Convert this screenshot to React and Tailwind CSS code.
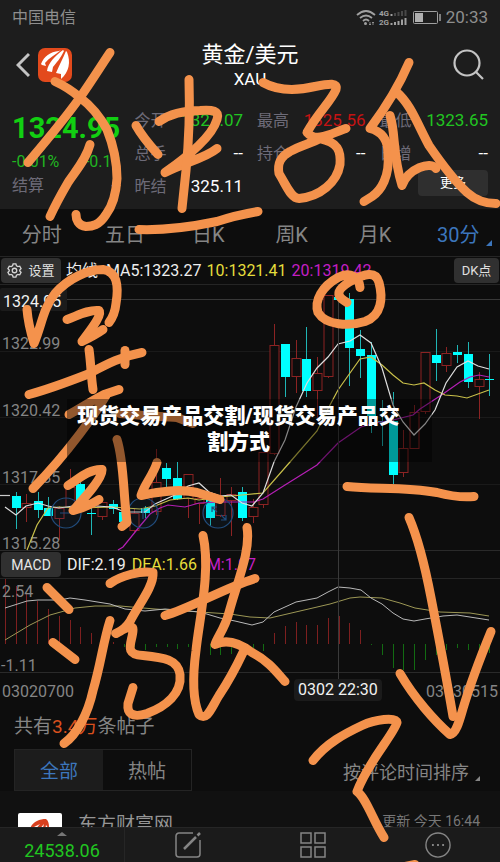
import { useState } from 'react'

const UP = '#8c2323'
const DOWN = '#00ffff'

// x centre, high, body top, body bottom, low, rising
const candles = [
  [16, 492, 496, 508, 529, false],
  [26, 494, 503, 507, 522, true],
  [38, 492, 501, 510, 518, false],
  [48, 497, 508, 516, 516, false],
  [59, 506, 508, 518, 540, true],
  [70, 469, 487, 507, 512, true],
  [80, 482, 484, 505, 510, false],
  [91, 506, 513, 514, 535, false],
  [102, 498, 502, 516, 520, true],
  [113, 500, 504, 509, 514, false],
  [123, 510, 512, 522, 524, false],
  [134, 508, 513, 530, 532, true],
  [145, 506, 508, 513, 518, false],
  [156, 449, 482, 511, 515, true],
  [166, 463, 468, 479, 488, false],
  [177, 462, 478, 499, 500, false],
  [188, 474, 474, 498, 518, true],
  [199, 493, 498, 503, 524, true],
  [210, 497, 500, 518, 526, false],
  [220, 478, 500, 515, 517, true],
  [231, 487, 494, 500, 536, true],
  [242, 487, 492, 518, 521, false],
  [253, 499, 507, 516, 523, true],
  [263, 452, 452, 504, 508, true],
  [274, 324, 345, 453, 455, true],
  [285, 344, 344, 377, 397, false],
  [296, 340, 358, 376, 393, true],
  [306, 327, 359, 391, 397, false],
  [317, 357, 373, 390, 418, true],
  [328, 295, 295, 376, 378, true],
  [338, 292, 297, 300, 333, false],
  [349, 293, 299, 348, 386, false],
  [360, 330, 349, 356, 378, false],
  [371, 342, 355, 416, 433, false],
  [382, 400, 421, 422, 446, false],
  [393, 392, 421, 475, 484, false],
  [403, 430, 448, 472, 477, true],
  [414, 405, 412, 448, 448, true],
  [425, 352, 352, 411, 414, true],
  [436, 329, 355, 363, 381, false],
  [446, 347, 353, 365, 372, true],
  [457, 345, 352, 355, 363, false],
  [468, 342, 354, 382, 388, false],
  [479, 372, 379, 386, 419, true],
  [489, 354, 379, 380, 396, false]
]

const ma5 = '5,507 16,515 26,506 38,503 48,506 59,508 80,505 112,507 125,512 145,512 155,504 166,499 177,494 188,486 199,483 209,492 220,496 231,495 242,503 252,506 263,493 274,462 285,440 296,407 307,383 317,368 328,357 338,344 350,341 360,335 371,343 382,368 393,405 403,422 414,435 425,424 435,410 446,383 457,367 468,361 478,366 489,369'
const ma10 = '27,550 37,525 48,508 59,507 80,508 112,507 140,509 155,506 170,500 188,498 199,500 220,497 231,496 242,495 263,493 290,462 317,431 330,405 338,390 350,373 360,359 371,357 382,365 393,375 403,383 414,385 424,383 435,390 445,395 457,396 467,398 489,390'
const ma20 = '118,550 123,547 140,526 150,514 160,508 168,505 185,507 199,503 220,502 242,502 254,502 263,499 285,485 317,465 338,443 361,427 375,423 393,420 413,415 420,409 443,394 460,382 470,377 479,375 489,377'

const dif = '5,608 27,601 38,600 60,600 70,598 85,600 110,604 125,609 145,611 165,609 200,612 220,618 235,621 252,625 263,622 274,612 296,602 317,598 328,592 338,587 350,588 361,590 371,598 382,604 393,613 403,619 414,621 425,619 443,616 457,615 489,620'
const dea = '5,640 30,625 50,615 75,608 95,606 120,606 155,609 200,612 230,614 250,617 270,618 300,611 330,604 350,598 360,597 382,598 400,603 415,608 440,612 470,613 489,616'

// x, end of the bar; the zero line is at 644
const macdBars = [
  [5, 578], [16, 586], [26, 594], [37, 601], [48, 609], [59, 616], [70, 620], [80, 627], [91, 633], [102, 639], [113, 642],
  [124, 647], [134, 647], [145, 650], [156, 647], [167, 647], [177, 649], [188, 647], [199, 650], [210, 655], [220, 655],
  [231, 654], [242, 652], [253, 648], [263, 651], [274, 633], [285, 626], [296, 622], [306, 625], [317, 625], [328, 618],
  [339, 616], [349, 623], [360, 630], [371, 645], [382, 655], [393, 668], [403, 670], [414, 670], [425, 660], [436, 655],
  [446, 650], [457, 648], [468, 650], [479, 652], [489, 653]
]

const strokes = [
  'M110 52 C98 70 90 83 80 97 C62 122 44 143 28 162',
  'M55 81 C66 86 73 91 80 97 C92 106 101 118 107 129 C113 144 117 162 117 178 C116 196 112 206 106 214 C99 225 92 226 86 226 C78 225 76 219 76 214',
  'M90 144 C86 159 76 170 68 182 C61 194 55 205 50 216',
  'M136 125 C141 134 149 144 158 154',
  'M159 121 C172 112 186 110 200 110 C212 109 220 110 217 119 C212 136 190 154 165 172 C184 162 205 158 217 148',
  'M189 79 C190 110 189 140 186 170 L182 208',
  'M139 229 C168 230 193 226 217 221 C232 216 246 213 258 211',
  'M263 82 C279 91 298 90 315 86 C330 83 338 82 336 89 C331 101 318 112 307 132 C316 143 333 132 346 128',
  'M320 138 C338 142 341 150 340 164 C337 182 320 196 299 198 C291 198 287 186 279 173 C277 162 281 156 290 151 C300 145 311 143 320 138',
  'M409 62 C400 83 385 108 370 128 C382 131 388 139 388 153 C390 176 381 190 372 196 L364 201',
  'M397 92 C411 104 418 125 429 145 C440 161 453 179 467 192 C476 200 486 203 496 203',
  'M390 115 C396 133 392 153 402 185 C408 168 431 160 436 168',
  'M27 309 C28 322 31 333 34 343 C42 324 43 308 55 293 C68 278 88 269 103 269 C117 271 119 285 116 303 C115 313 112 318 109 322',
  'M67 319 C78 315 88 309 99 310 C103 314 90 330 82 341 C90 337 96 334 103 329',
  'M89 349 C91 363 91 376 93 389',
  'M29 394 C51 388 69 381 87 374 C108 363 121 356 142 352',
  'M125 350 L125 364',
  'M69 414 C82 407 92 400 104 394 L119 389',
  'M106 395 C96 412 70 450 33 488',
  'M120 413 C140 415 160 416 177 417 L193 423',
  'M117 439 C124 461 123 490 127 522 L122 526',
  'M68 485 C79 478 90 468 102 469 C103 478 83 499 73 510 C82 508 91 504 99 499',
  'M157 462 C153 475 144 484 141 495 C160 491 179 488 197 492 L220 499',
  'M47 587 L69 609',
  'M53 642 L75 659',
  'M110 583 C121 575 141 570 153 572 C154 586 138 605 130 621 C123 632 114 633 116 633 C123 629 133 623 133 629 C133 641 122 654 143 655 C164 657 178 659 180 674 C182 693 166 706 147 713 C131 718 127 712 128 703 L133 687',
  'M110 620 C103 642 101 663 93 690 C88 713 77 734 64 743',
  'M203 535 C211 570 199 620 196 650 C192 680 193 700 199 714 C207 721 211 708 219 695 C229 680 235 669 243 652',
  'M247 527 C251 550 237 582 229 612 C225 628 217 637 215 644 C229 637 244 646 252 652 C269 661 276 671 285 681',
  'M165 615 C190 608 223 588 255 578',
  'M360 287 C359 276 350 271 338 277 C322 286 314 300 318 312 C326 325 349 326 365 321 C382 315 383 297 379 282 C376 270 365 273 350 281 C339 288 333 294 347 302',
  'M347 486 C375 489 405 486 437 492 C452 496 463 497 474 496',
  'M409 517 C419 540 426 571 431 597 C438 633 446 675 453 716',
  'M400 673 C414 697 434 720 450 734 C456 733 459 722 463 708 C471 681 482 653 491 631',
  'M313 760 C326 743 345 733 362 725 C375 719 396 716 397 722 C393 735 369 760 357 791 C366 797 373 820 384 837',
  'M400 867 L415 864'
]

const quotes = [
  { label: '今开', value: '1327.07', color: 'text-[#21c521]' },
  { label: '最高', value: '1325.56', color: 'text-[#c51313]' },
  { label: '最低', value: '1323.65', color: 'text-[#21c521]' },
  { label: '总手', value: '--', color: 'text-white' },
  { label: '持仓', value: '--', color: 'text-white' },
  { label: '日增', value: '--', color: 'text-white' },
  { label: '昨结', value: '1325.11', color: 'text-white' }
]

const periods = ['分时', '五日', '日K', '周K', '月K', '30分']

const StatusBar = () => (
  <div className="flex items-center justify-between h-9 px-3 text-[#8e8e8e]">
    <span className="text-base">中国电信</span>
    <div className="flex items-center gap-1">
      <svg width="86" height="18" viewBox="357 8 86 18" fill="none" stroke="#a0a0a0">
        <path d="M358 14 Q367 6 376 14 M361 17 Q367 12 373 17 M364 20 Q367 17 370 20" strokeWidth="1.8" />
        <circle cx="366.500" cy="22.500" r="1.500" fill="#a0a0a0" stroke="none" />
        <path d="M371 21v3m-1-1 1 1 1-1M374 24v-3m-1 1 1-1 1 1" strokeWidth=".8" />
        <g fill="#a0a0a0" stroke="none" fontFamily="Roboto" fontWeight="700" fontSize="8">
          <text x="380" y="15">4G</text>
          <text x="380" y="24">2G</text>
        </g>
        <path d="M392.500 15v-2M392.500 24v-2M396 24v-3M399.500 24v-4M403 24v-5.500M406.500 24v-7" strokeWidth="2" />
        <path d="M396 15v-3M399.500 15v-4M403 15v-5M406.500 15v-6" strokeWidth="2" stroke="#484848" />
        <rect x="414.500" y="10.500" width="24" height="12" rx="1" />
        <rect x="416" y="12" width="8" height="9" fill="#b0b0b0" stroke="none" />
        <path d="M441 13v7" strokeWidth="1.500" />
      </svg>
      <span className="text-[17px]">20:33</span>
    </div>
  </div>
)

const Logo = () => (
  <svg width="34" height="34" viewBox="0 0 34 34">
    <rect width="34" height="34" rx="7" fill="#e34a1c" />
    <g fill="#fff">
      <path d="M3 16C6 8 12 4 21 3L23 2C17 7 11 10 7 15L8 18L4 17Z" />
      <path d="M9 23C10 15 17 8 25 2L26 3C22 11 19 14 15 19L14 24Z" />
      <path d="M18 25C21 18 25 10 28 3L29 4C33 14 31 24 23 31L23 26Z" />
    </g>
  </svg>
)

const Header = () => (
  <header className="flex items-center justify-between h-[57px] px-4">
    <div className="flex items-center gap-2 w-20">
      <button aria-label="返回">
        <svg className="block" width="14" height="26" viewBox="2 0 14 26" fill="none" stroke="#c4c4c4" strokeWidth="3">
          <path d="M15 2 4 13l11 11" />
        </svg>
      </button>
      <Logo />
    </div>
    <h1 className="flex flex-col items-center text-white">
      <span className="text-[22px] leading-7">黄金/美元</span>
      <span className="text-[17px] leading-5">XAU</span>
    </h1>
    <div className="flex justify-end w-20">
      <button aria-label="搜索">
        <svg className="block" width="32" height="32" viewBox="0 0 32 32" fill="none" stroke="#c4c4c4" strokeWidth="2.200">
          <circle cx="15" cy="14" r="12.500" />
          <path d="M24 23l7 7" />
        </svg>
      </button>
    </div>
  </header>
)

const Quote = () => (
  <section className="grid grid-cols-4 gap-x-3.5 h-[116px] pt-[11px] px-3 text-base text-[#6d6b78]">
    <div>
      <div className="text-[29px] leading-12 font-bold text-[#12cf12]">1324.95</div>
      <div className="flex justify-between leading-5 text-[#21b521]">
        <span>-0.01%</span>
        <span>-0.18</span>
      </div>
      <div className="flex justify-between leading-7">
        <span>结算</span>
        <span className="text-white">--</span>
      </div>
    </div>
    <div className="col-span-3 grid grid-cols-3 grid-rows-3 gap-x-3.5 h-[99px]">
      {quotes.map(q => (
        <div key={q.label} className="flex items-center justify-between">
          <span>{q.label}</span>
          <span className={`text-[17px] ${q.color}`}>{q.value}</span>
        </div>
      ))}
      <button className="col-start-3 justify-self-end self-start w-[70px] h-[26px] rounded-sm bg-[#2f2f2f] text-[13px] text-white">
        更多
      </button>
    </div>
  </section>
)

const Corner = ({ size, color }) => (
  <svg width={size} height={size} viewBox="0 0 6 6" fill={color}>
    <path d="M6 0v6H0z" />
  </svg>
)

const PriceChart = () => (
  <svg className="block w-full" viewBox="0 285 500 266">
    <path d="M0 351.500H500M0 417.500H500M0 484.500H500" stroke="#1a1a1a" />
    <path d="M0 550.500H500" stroke="#2a2a2a" />
    <path d="M0 299.500H500" stroke="#383838" />
    <g fontSize="16" fill="#858585">
      <text x="2" y="349">1322.99</text>
      <text x="2" y="416">1320.42</text>
      <text x="2" y="483">1317.85</text>
      <text x="2" y="549">1315.28</text>
    </g>
    {candles.map(([x, high, top, bottom, low, rising]) => (
      <g key={x}>
        <path
          d={`M${x + 0.5} ${high}V${top}M${x + 0.5} ${bottom}V${low}`}
          stroke={rising ? UP : '#1fb5b5'}
        />
        {rising ? (
          <rect x={x - 4} y={top + 0.5} width="9" height={bottom - top} fill="#0d0d0d" stroke={UP} />
        ) : (
          <rect x={x - 4} y={top} width="9" height={bottom - top} fill={DOWN} />
        )}
      </g>
    ))}
    <g fill="none" strokeWidth="1.200">
      <path d="M0 495.500H10" stroke="#ccc" />
      <polyline points={ma20} stroke="#b51fb5" />
      <polyline points={ma10} stroke="#c9c04a" />
      <polyline points={ma5} stroke="#dedede" />
    </g>
    <g fill="#16406b" fillOpacity=".12" stroke="#214c7c" strokeWidth="1.200">
      <circle cx="66" cy="513" r="15" />
      <circle cx="143" cy="513" r="15" />
      <circle cx="218" cy="513" r="15" />
      <path d="M60 513h12M143 508v11M212 512v-5h5m-5 0 5 5M226 515v5h-5m5 0-5-5" />
    </g>
    <rect x="0" y="288" width="67" height="23" rx="2" fill="#1b1b1b" />
    <text x="3" y="307" fontSize="16" fill="#f2f2f2">1324.95</text>
  </svg>
)

const MacdChart = () => (
  <svg className="block w-full" viewBox="0 579 500 94">
    <path d="M0 672.500H500" stroke="#2a2a2a" />
    {macdBars.map(([x, y]) => (
      <path key={x} d={`M${x + 0.5} 644V${y}`} stroke={y < 644 ? '#7d1f1f' : '#126b12'} />
    ))}
    <g fill="none">
      <polyline points={dea} stroke="#9c9755" />
      <polyline points={dif} stroke="#b8b8b8" />
    </g>
    <g fontSize="16" fill="#858585">
      <text x="2" y="597">2.54</text>
      <text x="1" y="671">-1.11</text>
    </g>
  </svg>
)

const Charts = () => (
  <section className="relative">
    <div className="absolute top-7 bottom-[27px] left-[338px] w-px bg-[#3a3a3a]"></div>
    <div className="flex items-center gap-[5px] h-[29px] px-px border-y border-[#252525] text-base whitespace-nowrap">
      <button className="flex items-center justify-center gap-1.5 w-[60px] h-[25px] rounded bg-[#303030] text-[13px] text-[#e0e0e0]">
        <svg width="15" height="15" viewBox="0 0 16 16" fill="none" stroke="#d5d5d5" strokeWidth="1.400">
          <path d="M6.500 1h3l.6 2 1.500.9 2-.5L15 6l-1.400 1.500v1L15 10l-1.400 2.600-2-.5-1.500.9-.6 2h-3l-.6-2-1.500-.9-2 .5L1 10l1.400-1.500v-1L1 6l1.400-2.600 2 .5L5.900 3z" />
          <circle cx="8" cy="8" r="2.400" />
        </svg>
        设置
      </button>
      <span className="text-[#ededed]">均线&nbsp; MA5:1323.27</span>
      <span className="text-[#e6de3c]">10:1321.41</span>
      <span className="text-[#c41fc4]">20:1319.42</span>
      <button className="ml-auto w-[45px] h-[25px] rounded bg-[#303030] text-[13px] text-[#e0e0e0]">DK点</button>
    </div>
    <PriceChart />
    <div className="flex items-center gap-1.5 h-7 px-px border-b border-[#252525] text-base">
      <button className="w-[60px] h-[25px] rounded bg-[#303030] text-sm text-[#e8e8e8]">MACD</button>
      <span className="text-[#ededed]">DIF:2.19</span>
      <span className="text-[#e6de3c]">DEA:1.66</span>
      <span className="pl-1 text-[#c41fc4]">M:1.07</span>
    </div>
    <MacdChart />
    <div className="relative flex items-center justify-between h-[38px] px-0.5 text-base text-[#858585]">
      <span>03020700</span>
      <span>03030515</span>
      <span className="absolute top-1.5 left-[294px] px-1 leading-[22px] rounded-sm bg-[#1b1b1b] text-[#f2f2f2]">
        0302 22:30
      </span>
    </div>
  </section>
)

const Posts = () => {
  const [tab, setTab] = useState('全部')

  return (
    <section>
      <div className="h-[38px] px-3.5 leading-8 text-[19px] text-[#858585]">
        共有<span className="text-[#d9501e]">3.4万</span>条帖子
      </div>
      <div className="flex items-center justify-between px-3.5 text-[#858585]">
        <div className="flex border border-[#242424]">
          {['全部', '热帖'].map(name => (
            <button
              key={name}
              onClick={() => setTab(name)}
              className={`w-[88px] h-10 pt-1 text-[19px] ${tab === name ? 'bg-[#1c1c1c] text-[#3c76bd]' : ''}`}
            >
              {name}
            </button>
          ))}
        </div>
        <button className="flex items-end gap-1.5 pt-1.5 pr-1.5 text-lg">
          按评论时间排序
          <span className="pb-1.5"><Corner size={5} color="#858585" /></span>
        </button>
      </div>
      <article className="flex items-start h-9 pl-[18px] pr-5 overflow-hidden bg-[#111111]">
        <svg className="mt-[22px] shrink-0" width="44" height="44" viewBox="0 0 44 44">
          <rect width="44" height="44" rx="2" fill="#fff" />
          <path d="M12 16C14 9 21 6 28 6C31 8 31 12 31 16L28 12 27 18H24L26 11 20 18H16L22 11Z" fill="#d8401f" />
        </svg>
        <span className="mt-5 ml-4 leading-7 text-[19px] text-[#959595]">东方财富网</span>
        <span className="mt-[18px] ml-auto leading-6 text-sm text-[#777777]">更新 今天 16:44</span>
      </article>
    </section>
  )
}

const BottomBar = () => (
  <nav className="grid grid-cols-4 h-9 border-t border-[#262626] bg-[#1b1b1b]">
    <a href="#index" className="flex flex-col items-center pt-1 border-r border-[#262626] text-lg text-[#21c521]">
      <svg className="shrink-0" width="10" height="4" viewBox="0 0 10 4" fill="#777">
        <path d="M0 4 5 0l5 4z" />
      </svg>
      <span className="leading-[30px]">24538.06</span>
    </a>
    <button className="flex items-start justify-center pt-1" aria-label="发帖">
      <svg width="26" height="26" viewBox="0 0 26 26" fill="none" stroke="#858585" strokeWidth="1.500">
        <path d="M18 1H4a3 3 0 0 0-3 3v18a3 3 0 0 0 3 3h18a3 3 0 0 0 3-3V8" />
        <path d="M9 17 21 5M22.500 3.500 25 1" strokeWidth="2.500" />
      </svg>
    </button>
    <button className="flex items-start justify-center pt-1" aria-label="功能">
      <svg width="26" height="26" viewBox="0 0 26 26" fill="none" stroke="#858585" strokeWidth="1.500">
        <path d="M1 1h10v10H1zM15 1h10v10H15zM1 15h10v10H1zM15 15h10v10H15z" />
      </svg>
    </button>
    <button className="flex items-start justify-center pt-1" aria-label="更多功能">
      <svg width="26" height="26" viewBox="0 0 28 28" fill="none" stroke="#858585" strokeWidth="1.500">
        <circle cx="14" cy="14" r="13" />
        <path d="M7.500 14h2M13 14h2M18.500 14h2" strokeWidth="2.200" />
      </svg>
    </button>
  </nav>
)

const App = () => {
  const [period, setPeriod] = useState('30分')

  return (
    <div className="relative overflow-hidden bg-[#0d0d0d] font-['Roboto','Noto_Sans_CJK_SC',sans-serif]">
      <div className="bg-[#1d1d1d]">
        <StatusBar />
        <Header />
        <Quote />
      </div>

      {/* Period tabs */}
      <nav className="grid grid-cols-6 h-[47px]">
        {periods.map(p => (
          <button
            key={p}
            onClick={() => setPeriod(p)}
            className={`relative pt-1 text-xl ${period === p ? 'text-[#3c76bd]' : 'text-[#858585]'}`}
          >
            {p}
            {p === '30分' && (
              <span className="absolute right-2 bottom-2.5"><Corner size={6} color="#3c76bd" /></span>
            )}
          </button>
        ))}
      </nav>

      <Charts />
      <Posts />
      <BottomBar />

      {/* Hand drawn notes */}
      <svg className="absolute inset-0 w-full h-full pointer-events-none" viewBox="0 0 500 862">
        <g fill="none" stroke="#f4924c" strokeWidth="9" strokeLinecap="round" strokeLinejoin="round">
          {strokes.map(d => <path key={d} d={d} />)}
        </g>
      </svg>

      {/* Caption */}
      <h2 className="absolute top-[399px] left-[67px] w-[365px] h-[63px] pt-1 pr-7 pl-1.5 bg-black/40 text-center text-[21px] leading-[26px] font-black text-white">
        现货交易产品交割/现货交易产品交割方式
      </h2>
    </div>
  )
}

export default App
